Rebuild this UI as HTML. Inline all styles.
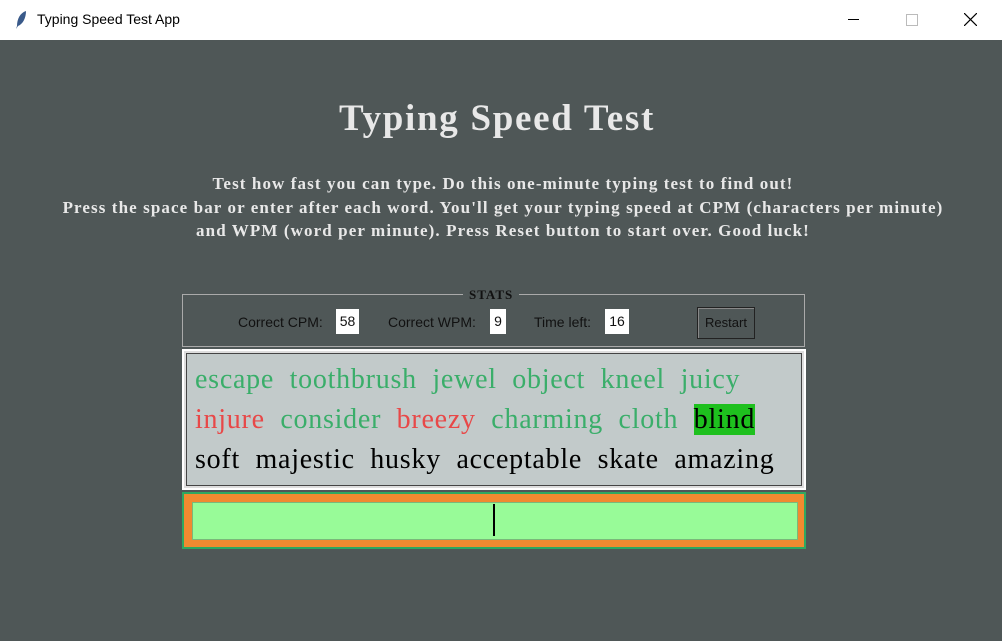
<!DOCTYPE html>
<html><head><style>
body{margin:0;width:1002px;height:641px;background:#4f5757;position:relative;overflow:hidden;font-family:"Liberation Serif",serif}
.tb{position:absolute;left:0;top:0;width:1002px;height:40px;background:#fff;font-family:"Liberation Sans",sans-serif;font-size:14px;color:#000}
.a{position:absolute}
.sub{position:absolute;left:0;width:1006px;text-align:center;color:#e8e8e8;font-weight:bold;font-size:17px;line-height:23.5px;top:172px;letter-spacing:1.1px}
.lbl{position:absolute;font-family:"Liberation Sans",sans-serif;font-size:14px;color:#111;top:314px}
.val{position:absolute;background:#fff;font-family:"Liberation Sans",sans-serif;font-size:14px;color:#111;top:309px;height:25px;line-height:25px;text-align:center}
.w{position:absolute;font-size:28px;white-space:pre;line-height:32px;letter-spacing:0.75px}
</style></head><body>
<div class="tb">
<svg class="a" style="left:14px;top:10px" width="14" height="20" viewBox="0 0 14 20"><path d="M12 1 C6 3 3 9 3 16 L2 19 L4 16 C9 14 12 8 12 1Z" fill="#3a5a8a"/></svg>
<span class="a" style="left:37px;top:11px">Typing Speed Test App</span>
<span class="a" style="left:848px;top:19px;width:11px;height:1px;background:#000"></span>
<span class="a" style="left:906px;top:14px;width:10px;height:10px;border:1px solid #bbb"></span>
<svg class="a" style="left:964px;top:13px" width="13" height="13"><path d="M0 0L13 13M13 0L0 13" stroke="#000" stroke-width="1.2"/></svg>
</div>
<div class="a" style="left:0;top:97px;width:994px;text-align:center;color:#e8e8e8;font-weight:bold;font-size:37px;letter-spacing:1.7px">Typing Speed Test</div>
<div class="sub">Test how fast you can type. Do this one-minute typing test to find out!<br>Press the space bar or enter after each word. You'll get your typing speed at CPM (characters per minute)<br>and WPM (word per minute). Press Reset button to start over. Good luck!</div>
<div class="a" style="left:182px;top:294px;width:621px;height:51px;border:1px solid #aaa"></div>
<div class="a" style="left:463px;top:287px;padding:0 6px;background:#4f5757;font-weight:bold;font-size:13px;color:#111;letter-spacing:1px">STATS</div>
<span class="lbl" style="left:238px">Correct CPM:</span>
<span class="val" style="left:336px;width:23px">58</span>
<span class="lbl" style="left:388px">Correct WPM:</span>
<span class="val" style="left:490px;width:16px">9</span>
<span class="lbl" style="left:534px">Time left:</span>
<span class="val" style="left:605px;width:24px">16</span>
<div class="a" style="left:697px;top:307px;width:56px;height:30px;background:#4f5757;border:1px solid #222;box-shadow:inset 1px 1px #888;font-family:'Liberation Sans',sans-serif;font-size:13px;color:#111;text-align:center;line-height:30px">Restart</div>
<div class="a" style="left:182px;top:349px;width:620px;height:137px;background:#c2caca;border:2px solid #fff;box-shadow:inset 0 0 0 2px #ddd,inset 0 0 0 3px #444"></div>
<div class="w" style="left:195px;top:364px;color:#3aae6a">escape  toothbrush  jewel  object  kneel  juicy</div>
<div class="w" style="left:195px;top:404px"><span style="color:#e84848">injure</span>  <span style="color:#3aae6a">consider</span>  <span style="color:#e84848">breezy</span>  <span style="color:#3aae6a">charming  cloth</span>  <span style="background:#1ec01e;color:#000">blind</span></div>
<div class="w" style="left:195px;top:444px;color:#000">soft  majestic  husky  acceptable  skate  amazing</div>
<div class="a" style="left:182px;top:492px;width:620px;height:53px;background:#f08a30;border:2px solid #2ea860"></div>
<div class="a" style="left:192px;top:502px;width:604px;height:36px;background:#98fb98;border:1px solid #7ab87a"></div>
<div class="a" style="left:493px;top:504px;width:2px;height:32px;background:#000"></div>
</body></html>
